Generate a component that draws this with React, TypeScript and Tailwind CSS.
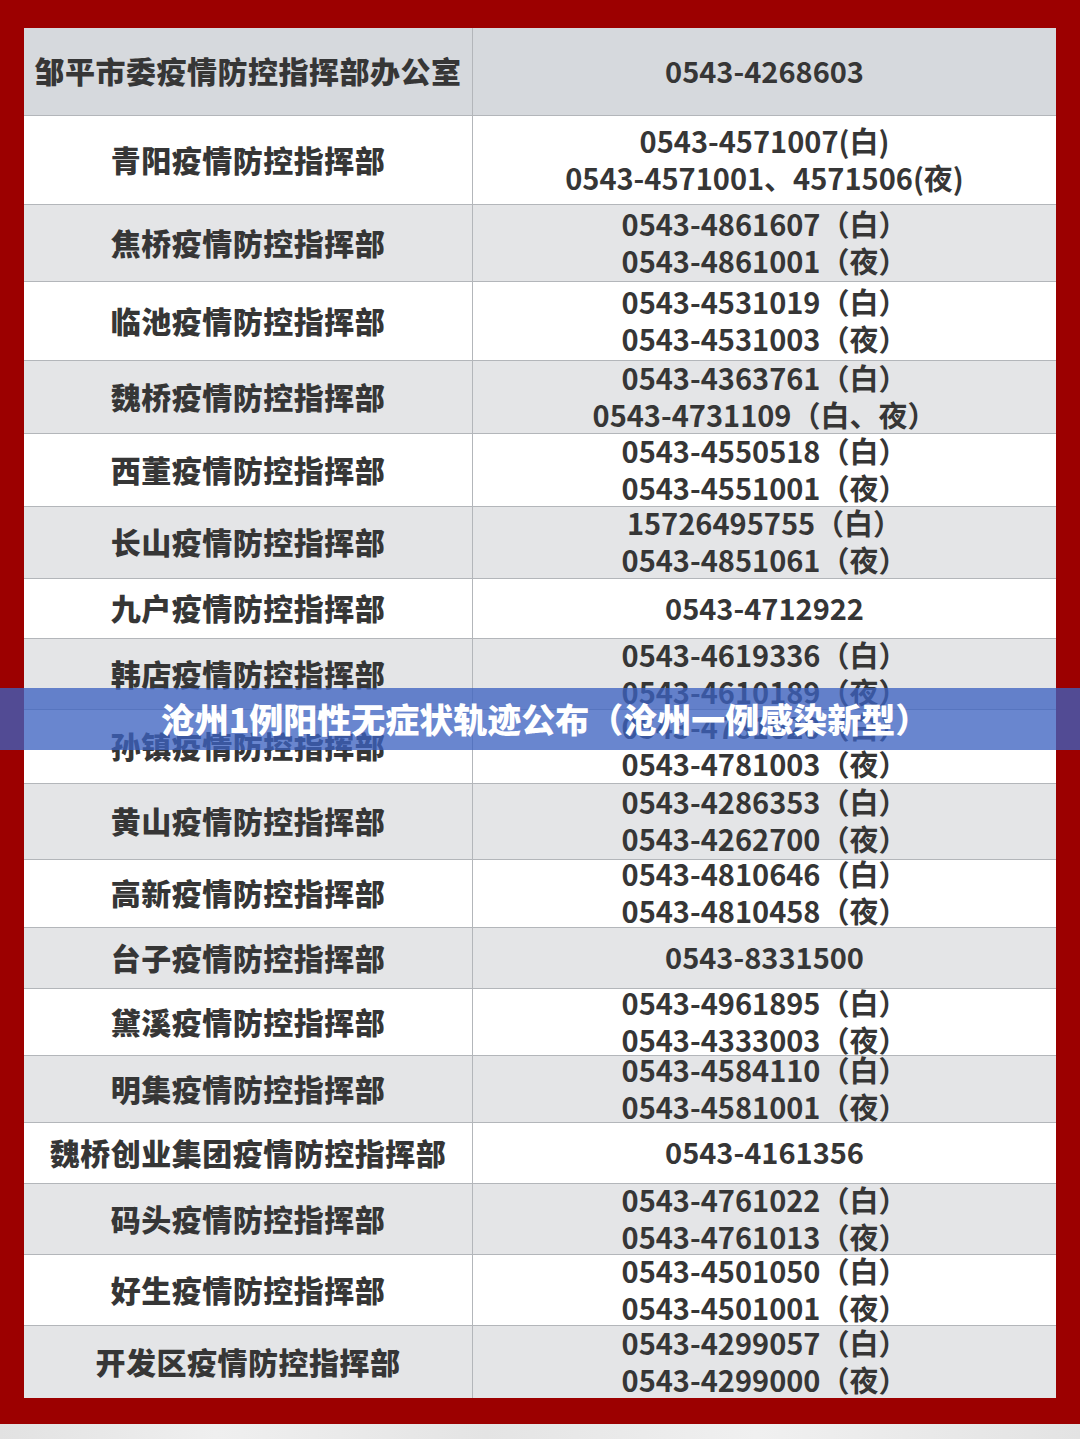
const rows: { name: string; phones: string[]; h: number; bg: string }[] = [
  { name: '邹平市委疫情防控指挥部办公室', phones: ['0543-4268603'], h: 88, bg: 'bg-[#d6d9dd]' },
  { name: '青阳疫情防控指挥部', phones: ['0543-4571007(白)', '0543-4571001、4571506(夜)'], h: 89, bg: 'bg-white' },
  { name: '焦桥疫情防控指挥部', phones: ['0543-4861607（白）', '0543-4861001（夜）'], h: 77, bg: 'bg-[#e4e5e7]' },
  { name: '临池疫情防控指挥部', phones: ['0543-4531019（白）', '0543-4531003（夜）'], h: 79, bg: 'bg-white' },
  { name: '魏桥疫情防控指挥部', phones: ['0543-4363761（白）', '0543-4731109（白、夜）'], h: 73, bg: 'bg-[#e4e5e7]' },
  { name: '西董疫情防控指挥部', phones: ['0543-4550518（白）', '0543-4551001（夜）'], h: 73, bg: 'bg-white' },
  { name: '长山疫情防控指挥部', phones: ['15726495755（白）', '0543-4851061（夜）'], h: 72, bg: 'bg-[#e4e5e7]' },
  { name: '九户疫情防控指挥部', phones: ['0543-4712922'], h: 60, bg: 'bg-white' },
  { name: '韩店疫情防控指挥部', phones: ['0543-4619336（白）', '0543-4610189（夜）'], h: 71, bg: 'bg-[#e4e5e7]' },
  { name: '孙镇疫情防控指挥部', phones: ['0543-4781020（白）', '0543-4781003（夜）'], h: 74, bg: 'bg-white' },
  { name: '黄山疫情防控指挥部', phones: ['0543-4286353（白）', '0543-4262700（夜）'], h: 76, bg: 'bg-[#e4e5e7]' },
  { name: '高新疫情防控指挥部', phones: ['0543-4810646（白）', '0543-4810458（夜）'], h: 68, bg: 'bg-white' },
  { name: '台子疫情防控指挥部', phones: ['0543-8331500'], h: 61, bg: 'bg-[#e4e5e7]' },
  { name: '黛溪疫情防控指挥部', phones: ['0543-4961895（白）', '0543-4333003（夜）'], h: 67, bg: 'bg-white' },
  { name: '明集疫情防控指挥部', phones: ['0543-4584110（白）', '0543-4581001（夜）'], h: 67, bg: 'bg-[#e4e5e7]' },
  { name: '魏桥创业集团疫情防控指挥部', phones: ['0543-4161356'], h: 61, bg: 'bg-white' },
  { name: '码头疫情防控指挥部', phones: ['0543-4761022（白）', '0543-4761013（夜）'], h: 71, bg: 'bg-[#e4e5e7]' },
  { name: '好生疫情防控指挥部', phones: ['0543-4501050（白）', '0543-4501001（夜）'], h: 71, bg: 'bg-white' },
  { name: '开发区疫情防控指挥部', phones: ['0543-4299057（白）', '0543-4299000（夜）'], h: 72, bg: 'bg-[#e4e5e7]' },
];

const font = { fontFamily: '"Noto Sans CJK SC", "Noto Sans", sans-serif' };

export default function App() {
  return (
    <div className="relative w-[1080px] h-[1439px] flex flex-col overflow-hidden bg-[#e8e8e8]" style={font}>
      {/* red frame */}
      <div className="bg-[#9c0000] pt-[28px] px-[24px] pb-[26px]">
        <div className="flex flex-col text-[#363636]">
          {rows.map((r, i) => (
            <div
              key={r.name}
              className={`flex ${r.bg} ${i < rows.length - 1 ? 'border-b border-[#b3b6ba]' : ''}`}
              style={{ height: r.h }}
            >
              <div className="w-[449px] shrink-0 flex items-center justify-center pb-[3px] text-[30px] font-black tracking-[0.5px] leading-none border-r border-[#b3b6ba]">
                {r.name}
              </div>
              <div className="flex-1 flex flex-col items-center justify-center pb-[3px] text-[29px] font-bold leading-[37px]">
                {r.phones.map(p => (
                  <div key={p}>{p}</div>
                ))}
              </div>
            </div>
          ))}
        </div>
      </div>
      <div className="flex-1 bg-[linear-gradient(90deg,#e2e2e2,#efefef_20%,#e4e4e4_45%,#f0f0f0_70%,#e3e3e3)]" />

      {/* title banner overlay */}
      <div className="absolute left-0 right-0 top-[688px] h-[62px] bg-[rgba(60,98,192,0.77)] flex items-center justify-center">
        <span className="text-white text-[34px] font-black leading-none pl-[10px]">
          沧州1例阳性无症状轨迹公布（沧州一例感染新型）
        </span>
      </div>
    </div>
  );
}
